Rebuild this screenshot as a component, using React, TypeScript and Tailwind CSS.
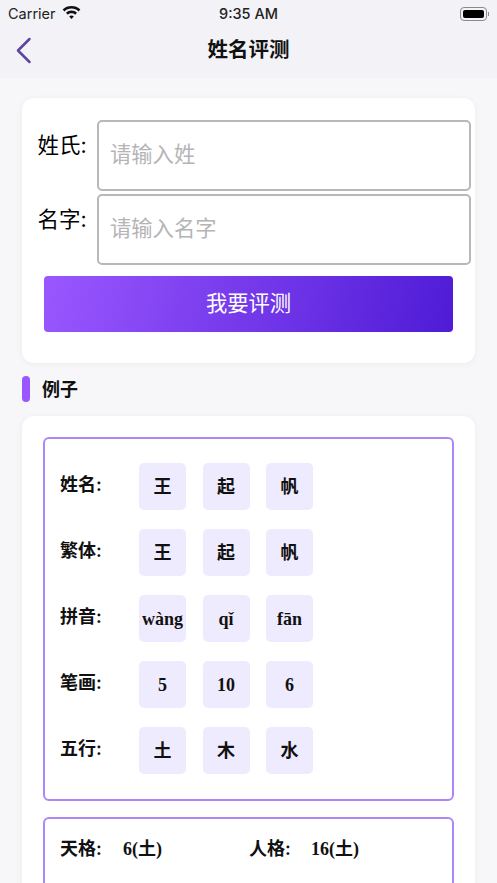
const cjk = "font-['Inter','Noto_Sans_CJK_SC',sans-serif]";
const serif = "font-['Liberation_Serif','Noto_Sans_CJK_SC',serif]";

const rows = [
  { label: "姓名:", cells: ["王", "起", "帆"] },
  { label: "繁体:", cells: ["王", "起", "帆"] },
  { label: "拼音:", cells: ["wàng", "qǐ", "fān"] },
  { label: "笔画:", cells: ["5", "10", "6"] },
  { label: "五行:", cells: ["土", "木", "水"] },
];

function Field({ label, hint }: { label: string; hint: string }) {
  return (
    <div className="flex items-start">
      <div className="w-[75px] pl-[15.500px] pt-[8px] text-[21.500px] leading-[34px] text-black">{label}</div>
      <div className="flex h-[71px] w-[374px] items-center rounded-[5px] border-2 border-[#b8b8b8] pb-[2px] pl-[11px] text-[21.300px] text-[#b4b4b6]">
        {hint}
      </div>
    </div>
  );
}

function StatusBar() {
  return (
    <div className="flex h-[28px] items-center justify-between px-[8px] text-[14.500px] text-[#222]">
      <div className="flex items-center gap-[6px]">
        <span>Carrier</span>
        <svg width="19" height="14" viewBox="0 0 19 14" fill="#111" className="mb-[3px]">
          <path d="M9.500 2.600c2.700 0 5.100 1 7 2.800l1.900-2C16 1.200 12.900 0 9.500 0S3 1.200.6 3.400l1.900 2c1.900-1.800 4.300-2.800 7-2.800z" />
          <path d="M9.500 7.300c1.400 0 2.600.5 3.600 1.400l1.900-2C13.500 5.300 11.600 4.500 9.500 4.500s-4 .8-5.500 2.200l1.900 2c1-.9 2.200-1.400 3.600-1.400z" />
          <path d="M9.500 9.500c-.9 0-1.700.3-2.300.9l2.300 2.600 2.300-2.600c-.6-.6-1.400-.9-2.300-.9z" />
        </svg>
      </div>
      <span className="absolute left-[219px] top-[3px] font-medium">9:35 AM</span>
      <div className="flex items-center gap-[1px]">
        <div className="h-[14px] w-[27px] rounded-[4px] border border-[#8a8a8a] p-[2px]">
          <div className="h-full w-full rounded-[2px] bg-black" />
        </div>
        <div className="h-[4px] w-[1px] bg-[#8a8a8a]" />
      </div>
    </div>
  );
}

export default function App() {
  return (
    <div className={`relative h-[883px] w-[497px] overflow-hidden bg-[#f7f6f9] ${cjk}`}>
      {/* top bar */}
      <div className="h-[78px] bg-[#f2f2f7]">
        <StatusBar />
        <div className="relative flex h-[44px] items-center justify-center text-[20.500px] font-semibold text-[#111]">
          <svg className="absolute left-[15px] top-[9px]" width="17" height="27" viewBox="0 0 17 27" fill="none">
            <path d="M14.500 2 L3 13.500 L14.500 25" stroke="#5f45a0" strokeWidth="2.500" strokeLinecap="round" strokeLinejoin="round" />
          </svg>
          姓名评测
        </div>
      </div>

      <div className="px-[22px] pt-[20px]">
        {/* form card */}
        <div className="h-[265px] w-[453px] rounded-[12px] bg-white pt-[22px] shadow-[0_1px_6px_rgba(0,0,0,0.05)]">
          <div className="flex flex-col gap-[3px]">
            <Field label="姓氏:" hint="请输入姓" />
            <Field label="名字:" hint="请输入名字" />
          </div>
          <div className="ml-[22px] mt-[11px] flex h-[56px] w-[409px] items-center justify-center rounded-[4px] bg-[linear-gradient(105deg,#9a57ff,#4f1bd6)] text-[21.300px] text-white">
            我要评测
          </div>
        </div>

        {/* section title */}
        <div className="mt-[13px] flex h-[26px] items-center gap-[12px]">
          <div className="h-[26px] w-[8px] rounded-[4px] bg-[#9a57ff]" />
          <span className="text-[18px] font-semibold text-[#111]">例子</span>
        </div>

        {/* example card */}
        <div className="mt-[14px] h-[500px] w-[453px] rounded-[12px] bg-white px-[21px] pt-[21px] shadow-[0_1px_6px_rgba(0,0,0,0.05)]">
          <div className="flex h-[364px] w-[411px] flex-col gap-[19px] rounded-[6px] border-2 border-[#ae86fb] pl-[15px] pt-[24px]">
            {rows.map((row) => (
              <div key={row.label} className="flex items-start">
                <div className="w-[79px] text-[18px] font-semibold leading-[44px] text-[#111]">{row.label}</div>
                <div className="flex gap-[16.500px]">
                  {row.cells.map((cell, i) => (
                    <div
                      key={i}
                      className={`flex h-[47px] w-[47px] items-center justify-center rounded-[5px] bg-[#efebfe] pt-[2px] text-[18px] font-bold text-[#111] ${serif}`}
                    >
                      {cell}
                    </div>
                  ))}
                </div>
              </div>
            ))}
          </div>
          <div className="mt-[16px] h-[120px] w-[411px] rounded-[6px] border-2 border-[#ae86fb] pl-[15px] pt-[15px]">
            <div className="flex items-center text-[18px] font-semibold leading-[30px] text-[#111]">
              <span className="w-[63px]">天格:</span>
              <span className={`w-[126px] font-bold ${serif}`}>6(土)</span>
              <span className="w-[62px]">人格:</span>
              <span className={`font-bold ${serif}`}>16(土)</span>
            </div>
            <div className="mt-[15px] flex items-center text-[18px] font-semibold leading-[30px] text-[#111]">
              <span className="w-[63px]">地格:</span>
              <span className={`w-[126px] font-bold ${serif}`}>16(土)</span>
              <span className="w-[62px]">外格:</span>
              <span className={`font-bold ${serif}`}>6(土)</span>
            </div>
          </div>
        </div>
      </div>
    </div>
  );
}
